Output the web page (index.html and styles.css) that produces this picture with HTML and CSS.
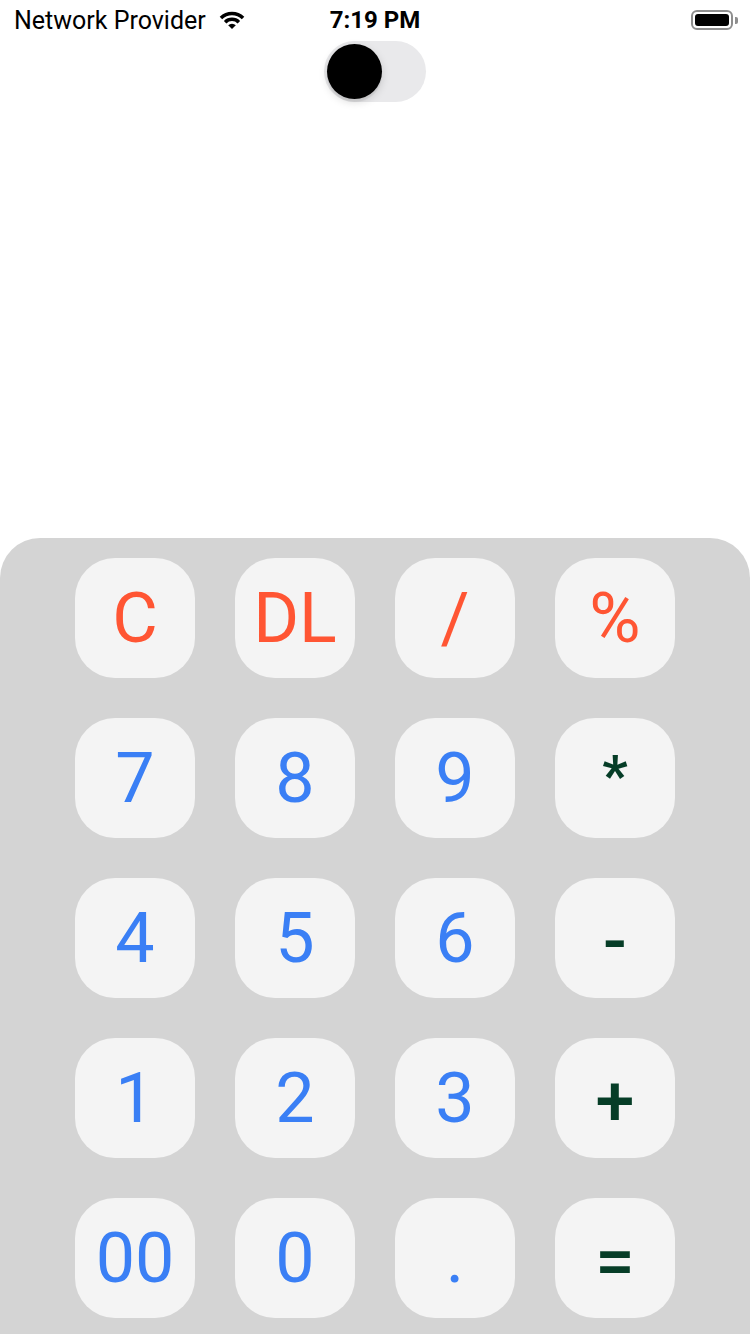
FILE: index.html
```html
<!DOCTYPE html>
<html>
<head>
<meta charset="utf-8">
<link rel="stylesheet" href="styles.css">
</head>
<body>
<div class="screen">
  <div class="status">
    <div class="status-left">
      <span class="carrier">Network Provider</span>
      <svg class="wifi" width="26" height="20" viewBox="0 0 26 20">
        <path d="M13 19 L9.2 15.2 A5.4 5.4 0 0 1 16.8 15.2 Z" fill="#000"/>
        <path d="M4.9 10.9 A11.6 11.6 0 0 1 21.1 10.9 L18.6 13.4 A8 8 0 0 0 7.4 13.4 Z" fill="#000"/>
        <path d="M0.7 6.7 A17.6 17.6 0 0 1 25.3 6.7 L22.8 9.2 A14 14 0 0 0 3.2 9.2 Z" fill="#000"/>
      </svg>
    </div>
    <div class="time">7:19 PM</div>
    <div class="battery">
      <div class="battery-body"><div class="battery-fill"></div></div>
      <div class="battery-cap"></div>
    </div>
  </div>
  <div class="toggle-row">
    <div class="toggle"><div class="knob"></div></div>
  </div>
  <div class="display"></div>
  <div class="pad">
    <div class="grid">
      <div class="key op-red">C</div>
      <div class="key op-red">DL</div>
      <div class="key op-red">/</div>
      <div class="key op-red">%</div>
      <div class="key num">7</div>
      <div class="key num">8</div>
      <div class="key num">9</div>
      <div class="key op-green star">*</div>
      <div class="key num">4</div>
      <div class="key num">5</div>
      <div class="key num">6</div>
      <div class="key op-green">-</div>
      <div class="key num">1</div>
      <div class="key num">2</div>
      <div class="key num">3</div>
      <div class="key op-green">+</div>
      <div class="key num">00</div>
      <div class="key num">0</div>
      <div class="key num">.</div>
      <div class="key op-green">=</div>
    </div>
  </div>
</div>
</body>
</html>
```
FILE: styles.css
```css
* { box-sizing: border-box; }
html, body { margin: 0; padding: 0; }
body {
  width: 750px;
  height: 1334px;
  overflow: hidden;
  background: #fff;
  font-family: Roboto, "Liberation Sans", sans-serif;
}
.screen {
  display: flex;
  flex-direction: column;
  height: 1334px;
}
.status {
  height: 40px;
  display: flex;
  align-items: center;
  justify-content: space-between;
  padding: 0 14px 0 14px;
  position: relative;
}
.status-left {
  display: flex;
  align-items: center;
  gap: 13px;
}
.carrier {
  font-size: 25px;
  color: #000;
}
.wifi { margin-top: -1px; }
.time {
  position: absolute;
  left: 0;
  right: 0;
  text-align: center;
  font-size: 24px;
  font-weight: 700;
  pointer-events: none;
}
.battery {
  display: flex;
  align-items: center;
  gap: 2px;
  margin-right: -2px;
}
.battery-body {
  width: 42px;
  height: 20px;
  border: 2px solid #8e8e8e;
  border-radius: 6px;
  padding: 2px;
}
.battery-fill {
  width: 100%;
  height: 100%;
  background: #000;
  border-radius: 3px;
}
.battery-cap {
  width: 3px;
  height: 7px;
  background: #8e8e8e;
  border-radius: 0 2px 2px 0;
}
.toggle-row {
  display: flex;
  justify-content: center;
  padding-top: 1px;
}
.toggle {
  width: 102px;
  height: 61px;
  border-radius: 31px;
  background: #e9e9eb;
  padding: 3px;
  display: flex;
  align-items: center;
}
.knob {
  width: 55px;
  height: 55px;
  border-radius: 50%;
  background: #000;
  box-shadow: 0 3px 8px rgba(0,0,0,0.15), 0 3px 1px rgba(0,0,0,0.06);
}
.display { flex: 1; }
.pad {
  height: 796px;
  background: #d4d4d4;
  border-radius: 40px 40px 0 0;
  padding-top: 20px;
  display: flex;
  justify-content: center;
}
.grid {
  display: grid;
  grid-template-columns: repeat(4, 120px);
  grid-auto-rows: 120px;
  gap: 40px;
}
.key {
  background: #f4f4f4;
  border-radius: 40px;
  display: flex;
  align-items: center;
  justify-content: center;
  font-size: 70px;
  line-height: 1;
  font-weight: 400;
}
.op-red { color: #ff5533; }
.num { color: #3a7ff5; }
.op-green {
  color: #063d27;
  font-weight: 500;
  font-size: 70px;
  padding-top: 6px;
}
.op-green.star {
  font-size: 56px;
  font-weight: 700;
  padding-top: 0;
  padding-bottom: 4px;
}
```
